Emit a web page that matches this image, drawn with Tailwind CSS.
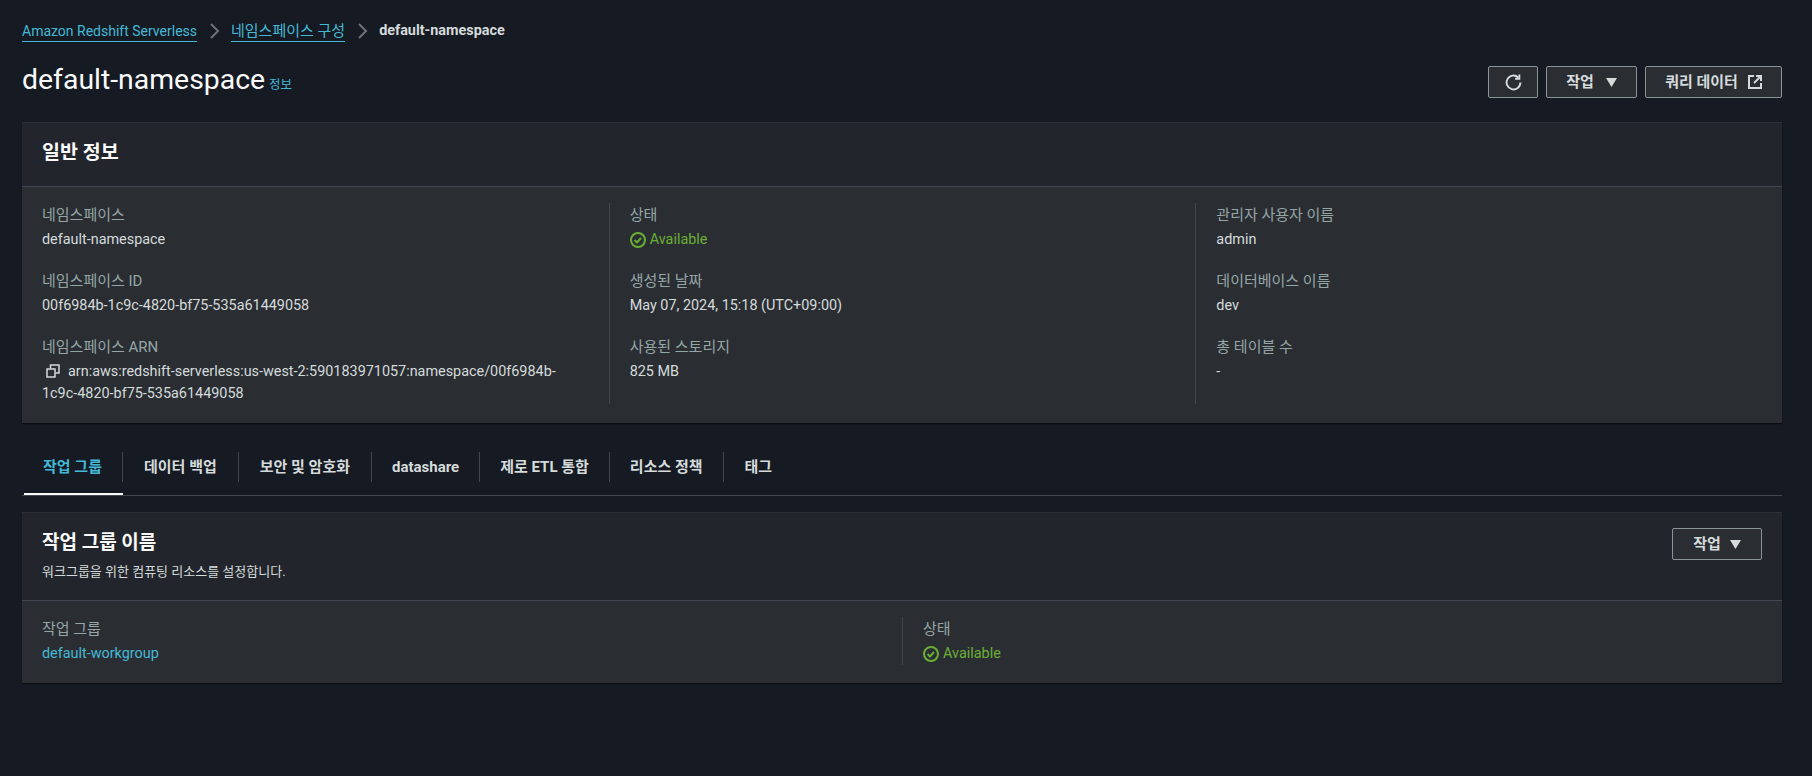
<!DOCTYPE html>
<html lang="ko">

<head>
    <meta charset="UTF-8">
    <script src="https://cdn.jsdelivr.net/npm/@tailwindcss/browser@4"></script>
    <title>default-namespace</title>
</head>

<body class="bg-[#161a23] min-h-screen font-['Roboto','Noto_Sans_CJK_KR',sans-serif] text-[14.4px] leading-[22px] text-[#d5dbdb]">
    <div class="pl-[22px] pr-[30px] pt-[20px]">
        <!-- breadcrumb -->
        <nav class="flex items-center h-[22px]">
            <a class="text-[14px] text-[#44b9d6] border-b border-[#44b9d6] h-[22px]">Amazon Redshift Serverless</a>
            <svg class="mx-[9px] w-[16px] h-[16px] text-[#6b7278]" viewBox="0 0 16 16" fill="none" stroke="currentColor" stroke-width="2"><path d="M5 1l7 7-7 7" /></svg>
            <a class="text-[15px] text-[#44b9d6] border-b border-[#44b9d6] h-[22px]">네임스페이스 구성</a>
            <svg class="mx-[9px] w-[16px] h-[16px] text-[#6b7278]" viewBox="0 0 16 16" fill="none" stroke="currentColor" stroke-width="2"><path d="M5 1l7 7-7 7" /></svg>
            <span class="font-bold">default-namespace</span>
        </nav>

        <!-- page header -->
        <div class="flex items-center justify-between mt-[24px] h-[32px]">
            <div class="flex items-baseline pb-[4px]">
                <h1 class="text-[28.400px] leading-[32px] text-[#fafafa]">default-namespace</h1>
                <a class="ml-[4px] text-[12.500px] text-[#44b9d6]">정보</a>
            </div>
            <div class="flex gap-[8px]">
                <button class="w-[50px] h-[32px] flex items-center justify-center bg-[#2a2e33] border border-[#879596] rounded-[2px]">
                    <svg class="w-[17px] h-[17px]" viewBox="0 0 16 16" fill="none" stroke="#d5dbdb" stroke-width="1.800"><path d="M14.500 8a6.500 6.500 0 1 1-2-4.700" /><path d="M13.500 0.500v4h-4" /></svg>
                </button>
                <button class="w-[91px] h-[32px] flex items-center justify-center gap-[12px] bg-[#2a2e33] border border-[#879596] rounded-[2px] text-[15px] font-bold">
                    작업
                    <svg class="w-[11px] h-[9px]" viewBox="0 0 10 8" fill="#d5dbdb"><path d="M0 0h10L5 8z" /></svg>
                </button>
                <button class="w-[137px] h-[32px] flex items-center justify-center gap-[10px] bg-[#2a2e33] border border-[#879596] rounded-[2px] text-[15px] font-bold">
                    쿼리 데이터
                    <svg class="w-[14px] h-[14px]" viewBox="0 0 14 14" fill="none" stroke="#d5dbdb" stroke-width="2"><path d="M6 1H1v12h12V8" /><path d="M8 1h5v5" /><path d="M13 1L6 8" /></svg>
                </button>
            </div>
        </div>

        <!-- general info card -->
        <section class="mt-[24px] bg-[#2a2e33] shadow-[0_1px_1px_#0b0d12]">
            <div class="h-[65px] bg-[#22262c] border-t border-[#2c3036] border-b border-b-[#414750] flex items-center px-[20px] pb-[3px]">
                <h2 class="text-[19.500px] font-bold text-[#fafafa]">일반 정보</h2>
            </div>
            <div class="grid grid-cols-3 gap-x-[40px] px-[20px] pt-[16px] pb-[19px]">
                <div class="flex flex-col gap-[19px] pt-[1px]">
                    <div>
                        <div class="text-[15px] text-[#95a5a6] mb-[3px]">네임스페이스</div>
                        <div>default-namespace</div>
                    </div>
                    <div>
                        <div class="text-[15px] text-[#95a5a6] mb-[3px]">네임스페이스 ID</div>
                        <div>00f6984b-1c9c-4820-bf75-535a61449058</div>
                    </div>
                    <div>
                        <div class="text-[15px] text-[#95a5a6] mb-[3px]">네임스페이스 ARN</div>
                        <div class="-mb-[1px]">
                            <svg class="inline-block w-[14px] h-[14px] ml-[4px] mr-[8px] align-[-2px]" viewBox="0 0 14 14" fill="none" stroke="#d5dbdb" stroke-width="1.500"><path d="M1 5h8v8H1z" /><path d="M4.500 4.500V1h8.500v8h-3.500" /></svg>arn:aws:redshift-serverless:us-west-2:590183971057:namespace/00f6984b-1c9c-4820-bf75-535a61449058
                        </div>
                    </div>
                </div>
                <div class="flex flex-col gap-[19px] pt-[1px] -ml-[20px] pl-[20px] border-l border-[#414750]">
                    <div>
                        <div class="text-[15px] text-[#95a5a6] mb-[3px]">상태</div>
                        <div class="flex items-center gap-[4px] text-[#6aaf35]">
                            <svg class="w-[16px] h-[16px]" viewBox="0 0 16 16" fill="none" stroke="#6aaf35" stroke-width="2"><circle cx="8" cy="8" r="7" /><path d="M4.500 8l2.500 2.500 4-4.500" /></svg>
                            Available
                        </div>
                    </div>
                    <div>
                        <div class="text-[15px] text-[#95a5a6] mb-[3px]">생성된 날짜</div>
                        <div>May 07, 2024, 15:18 (UTC+09:00)</div>
                    </div>
                    <div>
                        <div class="text-[15px] text-[#95a5a6] mb-[3px]">사용된 스토리지</div>
                        <div>825 MB</div>
                    </div>
                </div>
                <div class="flex flex-col gap-[19px] pt-[1px] -ml-[20px] pl-[20px] border-l border-[#414750]">
                    <div>
                        <div class="text-[15px] text-[#95a5a6] mb-[3px]">관리자 사용자 이름</div>
                        <div>admin</div>
                    </div>
                    <div>
                        <div class="text-[15px] text-[#95a5a6] mb-[3px]">데이터베이스 이름</div>
                        <div>dev</div>
                    </div>
                    <div>
                        <div class="text-[15px] text-[#95a5a6] mb-[3px]">총 테이블 수</div>
                        <div>-</div>
                    </div>
                </div>
            </div>
        </section>

        <!-- tabs -->
        <div class="mt-[24px] h-[49px] flex items-start border-b border-[#414750] text-[15px] font-bold">
            <div class="relative w-[101px] h-[48px] pt-[5px] pl-[21px]">
                <div class="absolute left-[2px] right-0 bottom-0 h-[2px] bg-[#fafafa]"></div>
                <div class="h-[30px] flex items-center text-[#44b9d6] border-r border-[#414750]">작업 그룹</div>
            </div>
            <div class="mt-[5px] h-[30px] px-[21px] flex items-center border-r border-[#414750]">데이터 백업</div>
            <div class="mt-[5px] h-[30px] px-[21px] flex items-center border-r border-[#414750]">보안 및 암호화</div>
            <div class="mt-[5px] h-[30px] px-[20px] flex items-center border-r border-[#414750]">datashare</div>
            <div class="mt-[5px] h-[30px] px-[20px] flex items-center border-r border-[#414750]">제로 ETL 통합</div>
            <div class="mt-[5px] h-[30px] px-[20px] flex items-center border-r border-[#414750]">리소스 정책</div>
            <div class="mt-[5px] h-[30px] px-[21px] flex items-center">태그</div>
        </div>

        <!-- workgroup card -->
        <section class="mt-[16px] bg-[#2a2e33] shadow-[0_1px_1px_#0b0d12]">
            <div class="h-[89px] bg-[#22262c] border-t border-[#2c3036] border-b border-b-[#414750] flex justify-between px-[20px] pt-[15px]">
                <div class="pt-[4px]">
                    <h2 class="text-[19px] font-bold text-[#fafafa]">작업 그룹 이름</h2>
                    <p class="mt-[10px] text-[13px] leading-[16px]">워크그룹을 위한 컴퓨팅 리소스를 설정합니다.</p>
                </div>
                <button class="w-[90px] h-[32px] flex items-center justify-center gap-[9px] bg-[#2a2e33] border border-[#879596] rounded-[2px] text-[15px] font-bold">
                    작업
                    <svg class="w-[11px] h-[9px]" viewBox="0 0 10 8" fill="#d5dbdb"><path d="M0 0h10L5 8z" /></svg>
                </button>
            </div>
            <div class="grid grid-cols-2 gap-x-[40px] px-[20px] pt-[16px] pb-[19px]">
                <div class="pt-[1px] -mb-[1px]">
                    <div class="text-[15px] text-[#95a5a6] mb-[3px]">작업 그룹</div>
                    <a class="text-[#44b9d6]">default-workgroup</a>
                </div>
                <div class="pt-[1px] -mb-[1px] -ml-[20px] pl-[20px] border-l border-[#414750]">
                    <div class="text-[15px] text-[#95a5a6] mb-[3px]">상태</div>
                    <div class="flex items-center gap-[4px] text-[#6aaf35]">
                        <svg class="w-[16px] h-[16px]" viewBox="0 0 16 16" fill="none" stroke="#6aaf35" stroke-width="2"><circle cx="8" cy="8" r="7" /><path d="M4.500 8l2.500 2.500 4-4.500" /></svg>
                        Available
                    </div>
                </div>
            </div>
        </section>
    </div>
</body>

</html>
